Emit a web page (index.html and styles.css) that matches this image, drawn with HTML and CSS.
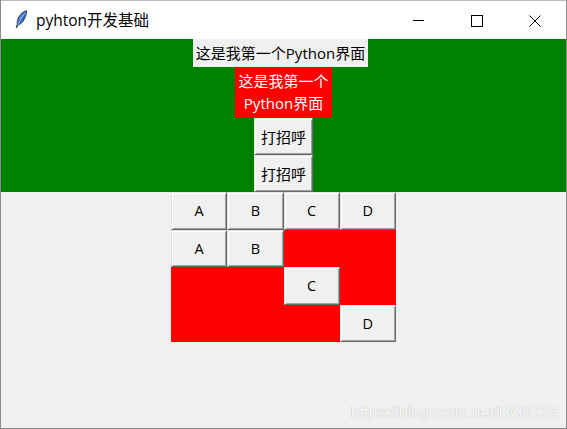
FILE: index.html
```html
<!DOCTYPE html>
<html lang="zh">
<head>
<meta charset="utf-8">
<title>pyhton开发基础</title>
<link rel="stylesheet" href="styles.css">
</head>
<body>
<div class="window">
  <div class="titlebar">
    <svg class="feather" width="14" height="18" viewBox="0 0 14 18">
      <defs>
        <linearGradient id="fg" x1="0" y1="0" x2="1" y2="1">
          <stop offset="0" stop-color="#9cc3f0"/>
          <stop offset="0.5" stop-color="#3b6fc4"/>
          <stop offset="1" stop-color="#1d3f86"/>
        </linearGradient>
      </defs>
      <path d="M12.5 0.8 C9 1.5 5.5 4.5 4 8.5 C3.2 10.8 3 12.8 3.4 14.2 L2 17.2 L2.8 17.5 L4.2 14.8 C6.5 14.6 9 12 10.6 8.6 C12 5.6 12.8 2.8 12.5 0.8 Z" fill="url(#fg)" stroke="#1a2a4a" stroke-width="0.8"/>
      <path d="M11.5 2.5 C8.5 6 6 10 4.2 14.8" fill="none" stroke="#dfe9f7" stroke-width="0.6"/>
    </svg>
    <span class="title">pyhton开发基础</span>
    <div class="controls">
      <svg class="ctl" width="46" height="39" viewBox="0 0 46 39"><path d="M17 19.5 H28" stroke="#000" stroke-width="1"/></svg>
      <svg class="ctl" width="46" height="39" viewBox="0 0 46 39"><rect x="17.5" y="14.5" width="11" height="11" fill="none" stroke="#000" stroke-width="1"/></svg>
      <svg class="ctl" width="46" height="39" viewBox="0 0 46 39"><path d="M17.5 14.5 L28.5 25.5 M28.5 14.5 L17.5 25.5" stroke="#000" stroke-width="1"/></svg>
    </div>
  </div>
  <div class="client">
    <div class="green">
      <div class="lbl-plain">这是我第一个Python界面</div>
      <div class="lbl-red">这是我第一个<br>Python界面</div>
      <div class="btn btn-hello">打招呼</div>
      <div class="btn btn-hello">打招呼</div>
    </div>
    <div class="grid">
      <div class="redfill"></div>
      <div class="btn cell r1 c1">A</div>
      <div class="btn cell r1 c2">B</div>
      <div class="btn cell r1 c3">C</div>
      <div class="btn cell r1 c4">D</div>
      <div class="btn cell r2 c1">A</div>
      <div class="btn cell r2 c2">B</div>
      <div class="btn cell r3 c3">C</div>
      <div class="btn cell r4 c4">D</div>
    </div>
    <div class="watermark">https://blog.csdn.net/HG0724</div>
  </div>
</div>
</body>
</html>
```

FILE: styles.css
```css
html, body {
  margin: 0;
  padding: 0;
  width: 567px;
  height: 429px;
  overflow: hidden;
  background: #f0f0f0;
}
.window {
  width: 567px;
  height: 429px;
  box-sizing: border-box;
  border: 1px solid #8a8a8a;
  border-top: none;
  display: flex;
  flex-direction: column;
  font-family: "Open Sans", "Noto Sans CJK SC", sans-serif;
  font-size: 15px;
  color: #000;
}
.titlebar {
  height: 39px;
  flex: none;
  background: #fff;
  display: flex;
  align-items: center;
  border-top: 1px solid #bdbdbd;
  box-sizing: border-box;
}
.feather {
  margin-left: 13px;
  margin-top: -2px;
}
.title {
  margin-left: 8px;
  font-size: 15.5px;
  margin-top: -1px;
}
.controls {
  margin-left: auto;
  display: flex;
  margin-right: 8px;
}
.ctl {
  display: block;
  margin-left: 12px;
}
.client {
  flex: 1;
  display: flex;
  flex-direction: column;
  background: #f0f0f0;
  position: relative;
}
.green {
  background: #008000;
  height: 153px;
  display: flex;
  flex-direction: column;
  align-items: center;
}
.lbl-plain {
  background: #f0f0f0;
  height: 28px;
  line-height: 28px;
  padding: 0 3px;
  margin-right: 6px;
  white-space: nowrap;
}
.lbl-red {
  background: #ff0000;
  color: #fff;
  width: 97px;
  height: 51px;
  box-sizing: border-box;
  text-align: center;
  line-height: 22px;
  padding-top: 3px;
  white-space: nowrap;
}
.btn {
  background: #f0f0f0;
  box-sizing: border-box;
  border: 1px solid;
  border-color: #e3e3e3 #696969 #696969 #e3e3e3;
  box-shadow: inset 1px 1px #fff, inset -1px -1px #a0a0a0;
  display: flex;
  align-items: center;
  justify-content: center;
}
.btn-hello {
  width: 59px;
  height: 37px;
}
.grid {
  align-self: center;
  width: 225px;
  display: grid;
  grid-template-columns: repeat(4, 1fr);
  grid-template-rows: repeat(4, 37.5px);
  font-size: 14.5px;
}
.redfill {
  grid-row: 2 / 5;
  grid-column: 1 / 5;
  background: #ff0000;
}
.cell { width: 100%; height: 100%; }
.r1 { grid-row: 1; }
.r2 { grid-row: 2; }
.r3 { grid-row: 3; }
.r4 { grid-row: 4; }
.c1 { grid-column: 1; }
.c2 { grid-column: 2; }
.c3 { grid-column: 3; }
.c4 { grid-column: 4; }
.watermark {
  position: absolute;
  right: 8px;
  bottom: 6px;
  font-family: "Liberation Sans", Arial, sans-serif;
  font-size: 16px;
  color: #fcfcfc;
  text-shadow: 0 0 1px rgba(0,0,0,0.35);
}
```
